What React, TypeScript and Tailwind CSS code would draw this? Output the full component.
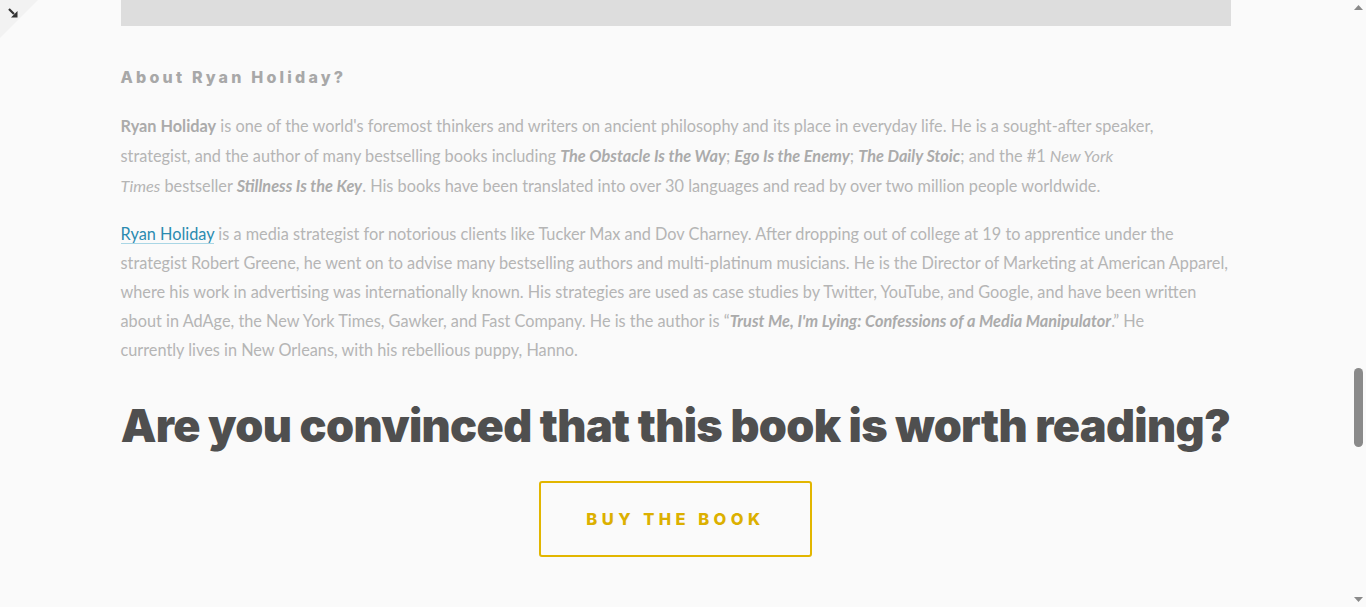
const body = "'Lato', 'Open Sans', sans-serif";
const display = "'Inter', 'DejaVu Sans', sans-serif";

function CornerPeel() {
  return (
    <svg className="absolute left-0 top-0 z-10" width="40" height="40" viewBox="0 0 40 40">
      <polygon points="0,0 38,0 0,38" fill="#f2f2f2" />
      <line x1="9" y1="9" x2="14" y2="14" stroke="#333" strokeWidth="2.2" />
      <polygon points="17.5,17.5 17.5,11 11,17.5" fill="#333" />
    </svg>
  );
}

function Scrollbar() {
  return (
    <aside className="flex h-full w-[15px] flex-col items-center bg-[#fafafa]">
      <div className="flex h-[15px] items-center justify-center">
        <svg width="9" height="5" viewBox="0 0 9 5">
          <polygon points="0,5 9,5 4.5,0" fill="#8a8a8a" />
        </svg>
      </div>
      <div className="h-[353px]" />
      <div className="h-[79px] w-[9px] rounded-full bg-[#8a8a8a]" />
      <div className="flex-1" />
      <div className="flex h-[15px] items-center justify-center">
        <svg width="9" height="5" viewBox="0 0 9 5">
          <polygon points="0,0 9,0 4.5,5" fill="#8a8a8a" />
        </svg>
      </div>
    </aside>
  );
}

export default function App() {
  return (
    <div className="relative flex h-[607px] overflow-hidden bg-[#fafafa]">
      <CornerPeel />
      <main className="flex-1">
        <div className="mx-auto w-[1110px]">
          <div className="h-[26px] bg-[#dddddd]" />

          <h3
            className="mt-[41px] text-[16px] font-extrabold leading-[20px] tracking-[0.2em] text-[#a8a8a8]"
            style={{ fontFamily: display }}
          >
            About Ryan Holiday?
          </h3>

          <div
            className="mt-[24px] whitespace-nowrap text-[16.3px] leading-[30px] text-[#b5b5b5]"
            style={{ fontFamily: body }}
          >
            <p>
              <strong className="font-bold text-[#ababab]">Ryan Holiday</strong> is one of the world's foremost
              thinkers and writers on ancient philosophy and its place in everyday life. He is a sought-after
              speaker,
              <br />
              strategist, and the author of many bestselling books including{" "}
              <strong className="font-bold italic text-[#ababab]">The Obstacle Is the Way</strong>;{" "}
              <strong className="font-bold italic text-[#ababab]">Ego Is the Enemy</strong>;{" "}
              <strong className="font-bold italic text-[#ababab]">The Daily Stoic</strong>; and the #1{" "}
              <em>New York</em>
              <br />
              <em>Times</em> bestseller <strong className="font-bold italic text-[#ababab]">Stillness Is the Key</strong>.
              His books have been translated into over 30 languages and read by over two million people worldwide.
            </p>

            <p className="mt-[18px] leading-[29px]">
              <a href="#" className="border-b border-[#a9d6e5] text-[#2b8bb0]">
                Ryan Holiday
              </a>{" "}
              is a media strategist for notorious clients like Tucker Max and Dov Charney. After dropping out of
              college at 19 to apprentice under the
              <br />
              strategist Robert Greene, he went on to advise many bestselling authors and multi-platinum musicians. He
              is the Director of Marketing at American Apparel,
              <br />
              where his work in advertising was internationally known. His strategies are used as case studies by
              Twitter, YouTube, and Google, and have been written
              <br />
              about in AdAge, the New York Times, Gawker, and Fast Company. He is the author is “
              <strong className="font-bold italic text-[#ababab]">
                Trust Me, I'm Lying: Confessions of a Media Manipulator
              </strong>
              .” He
              <br />
              currently lives in New Orleans, with his rebellious puppy, Hanno.
            </p>
          </div>

          <h2
            className="mt-[35px] whitespace-nowrap text-center text-[45px] font-black leading-[54px] tracking-[-0.015em] text-[#4f4f4f]"
            style={{ fontFamily: display }}
          >
            Are you convinced that this book is worth reading?
          </h2>

          <div className="mt-[28px] flex justify-center">
            <a
              href="#"
              className="flex h-[76px] w-[273px] items-center justify-center rounded-[3px] border-2 border-[#e2b600] text-[16.5px] font-extrabold tracking-[0.27em] text-[#dcb000]"
              style={{ fontFamily: display }}
            >
              BUY THE BOOK
            </a>
          </div>
        </div>
      </main>
      <Scrollbar />
    </div>
  );
}
